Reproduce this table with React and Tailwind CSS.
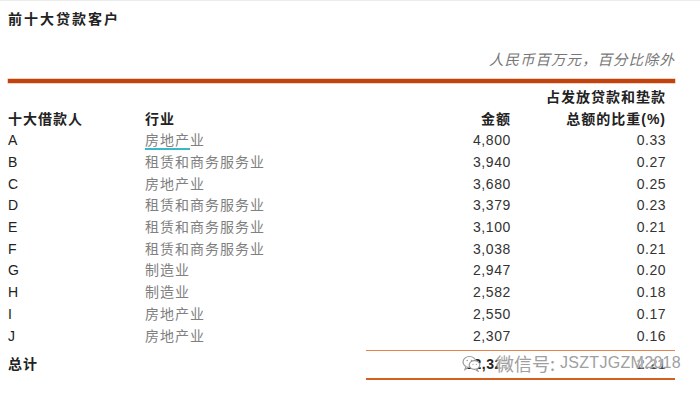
const rows = [
    ['A', '房地产业', '4,800', '0.33'],
    ['B', '租赁和商务服务业', '3,940', '0.27'],
    ['C', '房地产业', '3,680', '0.25'],
    ['D', '租赁和商务服务业', '3,379', '0.23'],
    ['E', '租赁和商务服务业', '3,100', '0.21'],
    ['F', '租赁和商务服务业', '3,038', '0.21'],
    ['G', '制造业', '2,947', '0.20'],
    ['H', '制造业', '2,582', '0.18'],
    ['I', '房地产业', '2,550', '0.17'],
    ['J', '房地产业', '2,307', '0.16'],
];

function WechatIcon() {
    return (
        <svg width="19" height="17" viewBox="0 0 19 17" fill="none" stroke="#9a9a9a" strokeWidth="1.2">
            <ellipse cx="7.5" cy="7" rx="6.5" ry="5.5" fill="#fff" />
            <path d="M4 11.5 L3 14.5 L6.5 12.3" fill="#fff" />
            <ellipse cx="12.5" cy="10" rx="5.3" ry="4.4" fill="#fff" />
            <path d="M15 14 L16 16.2 L13.5 14.4" fill="#fff" />
            <circle cx="5.2" cy="5.5" r="0.8" fill="#9a9a9a" stroke="none" />
            <circle cx="9.6" cy="5.5" r="0.8" fill="#9a9a9a" stroke="none" />
            <circle cx="11" cy="9.3" r="0.6" fill="#9a9a9a" stroke="none" />
            <circle cx="14.3" cy="9.3" r="0.6" fill="#9a9a9a" stroke="none" />
        </svg>
    );
}

export default function App() {
    return (
        <div className="h-[395px] w-[700px] overflow-hidden border-t border-[#ececec] bg-white pl-[8px] pr-[25px] font-['Liberation_Sans','Noto_Sans_CJK_SC',sans-serif] text-[14px] text-[#222]">
            <div className="flex h-[36px] items-center font-bold tracking-[2px]">前十大贷款客户</div>

            <div className="mt-[9px] flex h-[30px] items-center justify-end text-[14.5px] italic tracking-[1px] text-[#777]">
                人民币百万元，百分比除外
            </div>

            <div className="mt-[3px] h-[4px] bg-[#c1440e] shadow-[0_0_0_0.5px_#e9a584]" />

            <div className="mt-[3px] grid grid-cols-[137px_1fr_145px_164px] font-semibold tracking-[1px]">
                <div className="col-start-4 flex h-[22px] items-center justify-end pr-[9px]">占发放贷款和垫款</div>
                <div className="flex h-[22px] items-center">十大借款人</div>
                <div className="flex h-[22px] items-center">行业</div>
                <div className="flex h-[22px] items-center justify-end">金额</div>
                <div className="flex h-[22px] items-center justify-end pr-[9px]">总额的比重(%)</div>
            </div>

            {rows.map(([name, industry, amount, pct], i) => (
                <div key={name} className="grid h-[21.7px] grid-cols-[137px_1fr_145px_164px] items-center">
                    <div className="text-[#222]">{name}</div>
                    <div className="tracking-[1px] text-[#808080]">
                        {i === 0 ? (
                            <>
                                <span className="border-b-2 border-[#3ab7c8]">房地产</span>业
                            </>
                        ) : (
                            industry
                        )}
                    </div>
                    <div className="text-right tracking-[0.6px] text-[#333]">{amount}</div>
                    <div className="pr-[9px] text-right tracking-[0.5px] text-[#333]">{pct}</div>
                </div>
            ))}

            <div className="relative mt-[3px] grid grid-cols-[137px_1fr_145px_164px]">
                <div className="flex items-center font-semibold tracking-[1px]">总计</div>
                <div />
                <div className="col-span-2 grid h-[30px] grid-cols-[145px_164px] items-center border-t border-b-2 border-t-[#e8834c] border-b-[#d2601f] font-bold text-[#222]">
                    <div className="text-right tracking-[0.5px]">32,323</div>
                    <div className="pr-[9px] text-right tracking-[0.5px]">2.21</div>
                </div>

                <div className="absolute left-[454px] top-[5px]">
                    <WechatIcon />
                </div>
                <div className="absolute left-[488px] top-[1px] flex h-[24px] items-center gap-[5px] whitespace-nowrap leading-[24px] text-[#a0a0a0] [text-shadow:0_0_2px_#fff,0_0_2px_#fff,0_0_3px_#fff]">
                    <span className="font-['Noto_Sans_CJK_SC',sans-serif] text-[18px]">微信号:</span>
                    <span className="font-['Liberation_Sans',sans-serif] text-[16px] tracking-[0.3px]">JSZTJGZM2018</span>
                </div>
            </div>
        </div>
    );
}
